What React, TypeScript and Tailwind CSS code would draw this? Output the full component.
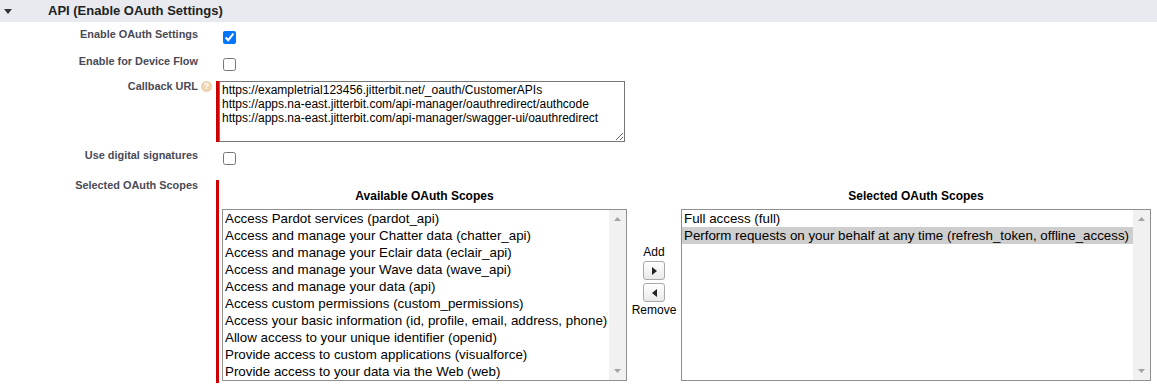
import React from 'react';

const availableScopes = [
  'Access Pardot services (pardot_api)',
  'Access and manage your Chatter data (chatter_api)',
  'Access and manage your Eclair data (eclair_api)',
  'Access and manage your Wave data (wave_api)',
  'Access and manage your data (api)',
  'Access custom permissions (custom_permissions)',
  'Access your basic information (id, profile, email, address, phone)',
  'Allow access to your unique identifier (openid)',
  'Provide access to custom applications (visualforce)',
  'Provide access to your data via the Web (web)',
];

const selectedScopes = [
  'Full access (full)',
  'Perform requests on your behalf at any time (refresh_token, offline_access)',
];

const callbackUrls = [
  'https://exampletrial123456.jitterbit.net/_oauth/CustomerAPIs',
  'https://apps.na-east.jitterbit.com/api-manager/oauthredirect/authcode',
  'https://apps.na-east.jitterbit.com/api-manager/swagger-ui/oauthredirect',
].join('\n');

function HelpIcon() {
  return (
    <span className="mt-[1px] flex h-[11px] w-[11px] items-center justify-center rounded-full bg-[#efd4b0] text-[9px] font-bold leading-[11px] text-white">
      ?
    </span>
  );
}

function Label({ children, help }: { children: React.ReactNode; help?: boolean }) {
  return (
    <div className="flex w-[216px] shrink-0 justify-end">
      <span className="text-right text-[10.9px] font-bold leading-[13px] text-[#4a4a56]">{children}</span>
      <span className="flex w-[18px] pl-[3px]">{help && <HelpIcon />}</span>
    </div>
  );
}

function Checkbox({ checked }: { checked?: boolean }) {
  return (
    <input
      type="checkbox"
      defaultChecked={checked}
      className="m-0 ml-[7px] mt-[3px] h-[13px] w-[13px] accent-[#0075ff]"
    />
  );
}

function Scrollbar() {
  return (
    <div className="flex w-[17px] shrink-0 flex-col items-center justify-between bg-[#f1f1f1] py-[7px]">
      <svg width="7" height="4" viewBox="0 0 7 4">
        <path d="M0 4L3.5 0L7 4Z" fill="#a3a3a3" />
      </svg>
      <svg width="7" height="4" viewBox="0 0 7 4">
        <path d="M0 0H7L3.5 4Z" fill="#a3a3a3" />
      </svg>
    </div>
  );
}

function ScopeList({ items, highlight, className }: { items: string[]; highlight?: number; className: string }) {
  return (
    <div className={`flex h-[172px] border border-[#8f8f8f] bg-white ${className}`}>
      <ul className="flex-1 overflow-hidden">
        {items.map((item, i) => (
          <li
            key={item}
            className={`whitespace-nowrap pl-[2px] text-[13.33px] leading-[17px] text-black ${
              i === highlight ? 'bg-[#cecece]' : ''
            }`}
          >
            {item}
          </li>
        ))}
      </ul>
      <Scrollbar />
    </div>
  );
}

function MoveButton({ dir }: { dir: 'right' | 'left' }) {
  return (
    <button className="flex h-[19px] w-[22px] items-center justify-center rounded-[3px] border border-[#a8a8a8] bg-linear-to-b from-white to-[#e9e9e9]">
      <svg width="5" height="8" viewBox="0 0 5 8">
        {dir === 'right' ? <path d="M0 0L5 4L0 8Z" fill="#222" /> : <path d="M5 0L0 4L5 8Z" fill="#222" />}
      </svg>
    </button>
  );
}

export default function App() {
  return (
    <div className="min-h-[388px] w-full bg-white font-['Liberation_Sans',Arial,sans-serif]">
      {/* Section header */}
      <div className="flex h-[22px] items-center bg-[#e8eaf0]">
        <svg className="ml-[4px]" width="8" height="5" viewBox="0 0 8 5">
          <path d="M0 0H8L4 5Z" fill="#333" />
        </svg>
        <h3 className="ml-[36px] text-[13px] font-bold text-[#222]">API (Enable OAuth Settings)</h3>
      </div>

      <div className="flex pt-[6px]">
        <Label>Enable OAuth Settings</Label>
        <Checkbox checked />
      </div>

      <div className="flex pt-[11px]">
        <Label>Enable for Device Flow</Label>
        <Checkbox />
      </div>

      {/* Callback URL */}
      <div className="flex pt-[9px]">
        <Label help>Callback URL</Label>
        <div className="mt-[1px] flex">
          <div className="w-[3px] bg-[#c00]" />
          <textarea
            readOnly
            defaultValue={callbackUrls}
            className="h-[61px] w-[406px] border border-[#767676] px-[2px] pt-[1px] text-[12px] leading-[14px] text-black outline-none"
          />
        </div>
      </div>

      <div className="flex pt-[7px]">
        <Label>Use digital signatures</Label>
        <Checkbox />
      </div>

      {/* Scopes */}
      <div className="flex pt-[14px]">
        <Label>Selected OAuth Scopes</Label>
        <div className="mt-[1px] flex border-l-[3px] border-[#c00] pb-[2px] pl-[3px]">
          <div className="flex flex-col items-center pt-[9px]">
            <h4 className="text-[12px] font-bold leading-[14px] text-black">Available OAuth Scopes</h4>
            <ScopeList items={availableScopes} className="mt-[6px] w-[405px]" />
          </div>
          <div className="flex w-[54px] flex-col items-center pt-[65px] text-[12px] leading-[14px] text-black">
            <span>Add</span>
            <div className="mt-[2px]">
              <MoveButton dir="right" />
            </div>
            <div className="mt-[3px]">
              <MoveButton dir="left" />
            </div>
            <span className="mt-[1px]">Remove</span>
          </div>
          <div className="flex flex-col items-center pt-[9px]">
            <h4 className="text-[12px] font-bold leading-[14px] text-black">Selected OAuth Scopes</h4>
            <ScopeList items={selectedScopes} highlight={1} className="mt-[6px] w-[470px]" />
          </div>
        </div>
      </div>
    </div>
  );
}
